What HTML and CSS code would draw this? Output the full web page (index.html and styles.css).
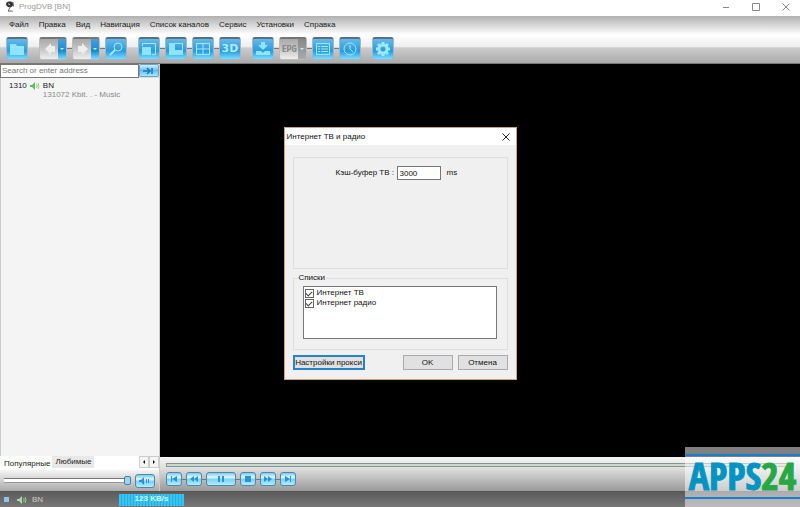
FILE: index.html
```html
<!DOCTYPE html>
<html lang="ru">
<head>
<meta charset="utf-8">
<title>ProgDVB [BN]</title>
<link rel="stylesheet" href="styles.css">
</head>
<body>
<div class="app">
  <header class="titlebar">
    <svg class="app-icon" viewBox="0 0 10 12"><path d="M1 2c2-2 6-2 7 0s0 5-3 5S0 5 1 2z" fill="#333"/><path d="M3 3l3 2M8 1l1 5M5 7l-2 4h5" stroke="#555" fill="none"/><path d="M3 3l2 1" stroke="#ddd"/></svg>
    <h1 class="app-title">ProgDVB [BN]</h1>
    <div class="window-buttons">
      <button class="win-btn" aria-label="Свернуть"><svg viewBox="0 0 8 8"><path d="M1 4.5h6"/></svg></button>
      <button class="win-btn" aria-label="Развернуть"><svg viewBox="0 0 8 8"><path d="M.5 .5h7v7h-7z"/></svg></button>
      <button class="win-btn" aria-label="Закрыть"><svg viewBox="0 0 8 8"><path d="M.5 .5l7 7M7.500 .5l-7 7"/></svg></button>
    </div>
  </header>
  <div class="chrome">
    <nav class="menu">
      <button>Файл</button><button>Правка</button><button>Вид</button><button>Навигация</button><button>Список каналов</button><button>Сервис</button><button>Установки</button><button>Справка</button>
    </nav>
    <div class="toolbar">
      <div class="tool-group">
        <button class="tool" aria-label="Открыть"><svg viewBox="0 0 16 16"><path class="fill" d="M1 3h6l1 2h7v9H1z"/><path class="line" d="M1 6h14"/></svg></button>
      </div>
      <div class="tool-group">
        <button class="tool split off" aria-label="Назад"><svg viewBox="0 0 16 16"><path class="fill" d="M9 2v3h4v6H9v3L3 8z"/></svg><span class="drop"></span></button>
        <button class="tool split off" aria-label="Вперёд"><svg viewBox="0 0 16 16"><path class="fill" d="M7 2v3H3v6h4v3l6-6z"/></svg><span class="drop"></span></button>
        <button class="tool" aria-label="Поиск"><svg viewBox="0 0 16 16"><circle class="line" cx="10" cy="6" r="4"/><path class="line thick" d="M7 9l-5 5"/></svg></button>
      </div>
      <div class="tool-group">
        <button class="tool" aria-label="Размер"><svg viewBox="0 0 16 16"><path class="line" d="M1.500 5V2.500h13v11H11"/><path class="fill" d="M1 6h9v8H1z"/></svg></button>
        <button class="tool" aria-label="Панель"><svg viewBox="0 0 16 16"><path class="fill" d="M1 2h6v7h8v5H1z"/><path class="line" d="M7 2.500h7.500V9"/></svg></button>
        <button class="tool" aria-label="Мозаика"><svg viewBox="0 0 16 16"><path class="line" d="M1.500 2.500h13v11h-13zM8 2v12M1 8h14"/></svg></button>
        <button class="tool three-d">3D</button>
      </div>
      <div class="tool-group">
        <button class="tool" aria-label="Запись"><svg viewBox="0 0 16 16"><path class="fill" d="M6 1h4v3h3L8 9 3 4h3zM1 10h5l2 2 2-2h5v4H1z"/></svg></button>
        <button class="tool split off grey" aria-label="EPG"><span class="epg">EPG</span><span class="drop"></span></button>
        <button class="tool" aria-label="Список"><svg viewBox="0 0 16 16"><path class="line" d="M1.500 2.500h13v11h-13zM3 5.500h2M6 5.500h7M3 8h2M6 8h7M3 10.500h2M6 10.500h7"/></svg></button>
        <button class="tool" aria-label="Планировщик"><svg viewBox="0 0 16 16"><circle class="line" cx="8" cy="8" r="6"/><path class="line" d="M8 4v4l3 3"/></svg></button>
      </div>
      <div class="tool-group">
        <button class="tool" aria-label="Настройки"><svg viewBox="0 0 16 16"><circle class="line gear" cx="8" cy="8" r="4"/><path class="line gear" d="M8 1v3M8 12v3M1 8h3M12 8h3M3 3l2 2M11 11l2 2M13 3l-2 2M5 11l-2 2"/></svg></button>
      </div>
    </div>
  </div>
  <div class="main">
    <aside class="sidebar">
      <form class="search">
        <input type="text" aria-label="Адрес" placeholder="Search or enter address">
        <button type="button" class="go" aria-label="Перейти"><svg viewBox="0 0 16 8"><path d="M2 4h6M6 1l3 3-3 3M11 1v6" stroke="#147bc0" fill="none" stroke-width="1.500"/></svg></button>
      </form>
      <ul class="channels">
        <li class="channel">
          <span>1310</span>
          <svg class="speaker" viewBox="0 0 10 8"><path d="M0 3h2l3-3v8L2 5H0z" fill="#65b865"/><path d="M6.500 2q1.500 2 0 4M8 1q2 3 0 6" stroke="#8bd08b" fill="none"/></svg>
          <div class="channel-text"><div>BN</div><div class="info">131072 Kbit. . - Music</div></div>
        </li>
      </ul>
      <div class="tabs">
        <button class="tab active">Популярные</button><button class="tab">Любимые</button>
        <div class="tab-scroll"><button aria-label="Влево"><svg viewBox="0 0 6 6"><path d="M4 1v4L2 3z"/></svg></button><button aria-label="Вправо"><svg viewBox="0 0 6 6"><path d="M2 1v4l2-2z"/></svg></button></div>
      </div>
      <div class="volume">
        <input type="range" aria-label="Громкость" value="100">
        <button class="media mute" aria-label="Звук"><svg viewBox="0 0 14 8"><path d="M1 3h2l3-3v8L3 5H1zM8 2h1v4H8zM10 2h1v4h-1z"/></svg></button>
      </div>
    </aside>
    <section class="player">
      <div class="video"></div>
      <div class="controls">
        <div class="seek"></div>
        <div class="media-row">
          <button class="media" aria-label="Предыдущий"><svg viewBox="0 0 14 8"><path d="M4 1h1v6H4zM10 1v6L5 4z"/></svg></button>
          <button class="media" aria-label="Перемотка назад"><svg viewBox="0 0 14 8"><path d="M7 1v6L3 4zM11 1v6L7 4z"/></svg></button>
          <button class="media wide" aria-label="Пауза"><svg viewBox="0 0 14 8"><path d="M4 1h2v6H4zM8 1h2v6H8z"/></svg></button>
          <button class="media" aria-label="Стоп"><svg viewBox="0 0 14 8"><path d="M4 1h6v6H4z"/></svg></button>
          <button class="media" aria-label="Перемотка вперёд"><svg viewBox="0 0 14 8"><path d="M3 1v6l4-3zM7 1v6l4-3z"/></svg></button>
          <button class="media" aria-label="Следующий"><svg viewBox="0 0 14 8"><path d="M4 1v6l5-3zM9 1h1v6H9z"/></svg></button>
        </div>
      </div>
    </section>
  </div>
  <footer class="status">
    <span class="square"></span>
    <svg class="speaker" viewBox="0 0 10 8"><path d="M0 3h2l3-3v8L2 5H0z" fill="#a8dba0"/><path d="M6.500 2q1.500 2 0 4M8 1q2 3 0 6" stroke="#8bd08b" fill="none"/></svg>
    <span class="station">BN</span>
    <span class="rate">123 KB/s</span>
  </footer>
</div>

<div class="dialog" role="dialog" aria-labelledby="dialog-title">
  <div class="dialog-head">
    <h2 id="dialog-title">Интернет ТВ и радио</h2>
    <button class="close" aria-label="Закрыть"><svg viewBox="0 0 8 8"><path d="M.5 .5l7 7M7.500 .5l-7 7"/></svg></button>
  </div>
  <div class="dialog-body">
    <div class="panel">
      <label for="cache">Кэш-буфер ТВ :</label>
      <input id="cache" type="text" value="3000">
      <span>ms</span>
    </div>
    <fieldset class="lists">
      <legend>Списки</legend>
      <div class="listbox">
        <label><input type="checkbox" checked>Интернет ТВ</label>
        <label><input type="checkbox" checked>Интернет радио</label>
      </div>
    </fieldset>
    <div class="actions">
      <button class="btn focus">Настройки прокси</button>
      <button class="btn">OK</button>
      <button class="btn">Отмена</button>
    </div>
  </div>
</div>

<div class="badge"><div class="badge-text">APPS<span>24</span></div></div>
</body>
</html>
```
FILE: styles.css
```css
* { box-sizing: border-box; }
html, body { height: 100%; margin: 0; }
body { font: 8px/10px "Liberation Sans", sans-serif; color: #222; overflow: hidden; background: #000; }
button, input { font: inherit; color: inherit; margin: 0; padding: 0; }
button { border: 0; background: none; white-space: nowrap; }
svg { display: block; }
h1, h2 { margin: 0; font: inherit; }

.app { display: flex; flex-direction: column; height: 100vh; }

.titlebar { display: flex; align-items: center; height: 16px; padding: 0 10px 3px 5px; background: #fff; flex: none; }
.app-icon { width: 10px; height: 11px; }
.app-title { margin-left: 4px; color: #999; }
.window-buttons { display: flex; gap: 22px; margin-left: auto; }
.win-btn svg { width: 8px; height: 8px; fill: none; stroke: #888; }

.chrome { flex: none; border-bottom: 1px solid #777; background: linear-gradient(#b0b0b0, #fff 40%, #eee 65%, #ccc 68%, #aaa); }
.menu { display: flex; align-items: center; gap: 10px; height: 17px; padding-left: 9px; }
.toolbar { display: flex; height: 30px; align-items: center; padding: 0 6px; gap: 11px; }
.tool-group { display: flex; gap: 5px; position: relative; }
.tool-group::before { content: ""; position: absolute; left: 4px; right: 4px; top: 11px; height: 1px; background: #777; }
.tool { position: relative; display: flex; align-items: center; justify-content: center; width: 22px; height: 23px; border: 1px solid #9fb8c8; border-top: 2px solid #587080; border-radius: 3px; background: linear-gradient(#68b9e7, #2a9ade 60%, #7bdcff); }
.tool svg { width: 16px; height: 16px; }
.fill { fill: #8ce5fc; }
.line { fill: none; stroke: #9aeaff; }
.thick { stroke-width: 2; }
.gear { stroke-width: 3; }
.off .fill { fill: #eee; }
.split { width: 28px; justify-content: flex-start; padding-left: 2px; background: linear-gradient(#aaa, #c5c5c5 50%, #eee); border-color: #777 #bbb #bbb; }
.drop { display: flex; align-items: center; justify-content: center; width: 8px; align-self: stretch; margin-left: auto; background: linear-gradient(#4c9ed6, #198bd2 60%, #7bdcff); }
.drop::after { content: ""; border: 2px solid transparent; border-top-color: #bdefff; border-bottom: 0; }
.grey .drop { background: linear-gradient(#888, #aaa); }
.epg { color: #888; font: bold 9px "Roboto Condensed", sans-serif; }
.three-d { color: #a5edff; font: bold 11px "DejaVu Sans", sans-serif; }

.main { display: flex; flex: 1; min-height: 0; }
.sidebar { display: flex; flex-direction: column; width: 160px; flex: none; background: #f4f4f4; border-right: 1px solid #ccc; }
.search { display: flex; height: 14px; flex: none; background: #ddd; }
.search input { flex: 1; min-width: 0; border: 1px solid #777; background: #fff; padding: 0 1px; }
.search input::placeholder { color: #777; }
.go { width: 20px; height: 13px; border: 1px solid #68a4c5; border-radius: 2px; background: linear-gradient(#d5f1ff, #67bdec 50%, #a9e9ff); }
.go svg { width: 16px; height: 8px; margin: 0 auto; }
.channels { flex: 1; margin: 0; padding: 3px 8px; list-style: none; border-left: 1px solid #ccc; }
.channel { display: flex; gap: 3px; color: #222; }
.speaker { width: 10px; height: 8px; flex: none; margin-top: 1px; }
.info { color: #888; line-height: 8px; }
.tabs { display: flex; height: 14px; flex: none; background: #fff; align-items: flex-start; }
.tab { padding: 0 3px; height: 12px; background: #e8e8e8; }
.tab.active { height: 14px; background: #fff; padding: 2px 2px 0 4px; }
.tab-scroll { display: flex; margin-left: auto; }
.tab-scroll button { width: 10px; height: 12px; border: 1px solid #ccc; background: #f4f4f4; }
.tab-scroll svg { width: 6px; height: 6px; margin: 0 auto; fill: #111; }
.volume { display: flex; align-items: center; gap: 4px; height: 21px; flex: none; padding: 0 4px; background: linear-gradient(#f5f5f5, #aaa); }
.volume input { appearance: none; flex: 1; min-width: 0; height: 9px; background: linear-gradient(#777, #777) 0 2px / 100% 1px no-repeat, linear-gradient(#fff, #fff) 0 3px / 100% 3px no-repeat, linear-gradient(#999, #999) 0 6px / 100% 1px no-repeat; }
.volume input::-webkit-slider-thumb { appearance: none; width: 7px; height: 9px; border: 1px solid #477f9e; border-radius: 2px; background: #9fd3ee; }

.player { display: flex; flex-direction: column; flex: 1; min-width: 0; }
.video { flex: 1; background: #000; }
.controls { height: 34px; flex: none; padding: 6px 6px 0; background: linear-gradient(#f5f5f5, #ddd 35%, #999); }
.seek { height: 4px; border: 1px solid #87958c; background: #cbd8ce; }
.media-row { position: relative; display: flex; width: max-content; gap: 4px; margin-top: 5px; }
.media-row::before { content: ""; position: absolute; left: 4px; right: 4px; top: 7px; height: 1px; background: #777; }
.media { position: relative; width: 16px; height: 14px; border: 1px solid #4a89ac; border-radius: 3px; background: linear-gradient(#83c8ec, #dcf6ff 35%, #7ecff5 55%, #b4eeff); }
.media svg { width: 14px; height: 8px; margin: 0 auto; fill: #2a93d2; }
.wide { width: 30px; }
.mute { width: 20px; }

.status { display: flex; align-items: center; height: 16px; flex: none; gap: 5px; padding: 0 4px; color: #ccc; border-top: 1px solid #555; background: linear-gradient(#5c5c5c, #777); }
.square { width: 5px; height: 5px; margin-right: 3px; background: #8cc6ef; }
.station { width: 82px; }
.rate { width: 65px; height: 12px; text-align: center; font-weight: bold; color: #d5f6ff; background: repeating-linear-gradient(90deg, #36c4f2 0 2px, #28afe0 2px 3px); }

.dialog { position: absolute; inset: 0; margin: auto; width: 233px; height: max-content; border: 1px solid #c9a482; background: #f0f0f0; color: #111; }
.dialog-head { display: flex; align-items: center; justify-content: space-between; height: 17px; padding: 0 6px 0 2px; background: #fff; }
.close svg { width: 8px; height: 8px; fill: none; stroke: #222; }
.dialog-body { padding: 12px 8px 9px; }
.panel { display: flex; align-items: flex-start; height: 112px; padding: 8px 0 0 42px; border: 1px solid #ddd; line-height: 13px; }
.panel input { width: 44px; height: 14px; margin: 0 6px 0 auto; padding: 0 2px; border: 1px solid #777; background: #fff; }
.panel span { width: 60px; }
.lists { margin: 4px 0 0; padding: 3px 10px 10px 9px; border: 1px solid #ddd; min-width: 0; }
.lists legend { margin-left: -5px; padding: 0 1px; }
.listbox { height: 53px; padding: 1px; border: 1px solid #777; background: #fff; }
.listbox label { display: flex; align-items: center; gap: 3px; }
.listbox input { appearance: none; width: 9px; height: 9px; border: 1px solid #666; display: grid; place-items: center; background: #fff; }
.listbox input:checked::after { content: ""; width: 5px; height: 3px; border: solid #444; border-width: 0 0 1px 1px; transform: rotate(-45deg); }
.actions { display: flex; gap: 5px; margin-top: 5px; }
.btn { width: 50px; height: 15px; border: 1px solid #aaa; background: #e1e1e1; }
.btn.focus { width: 72px; margin-right: auto; border: 2px solid #2683c4; }

.badge { position: absolute; right: 0; bottom: 0; width: 115px; height: 60px; padding-top: 7px; background: rgba(255, 255, 255, 0.5); }
.badge-text { height: 45px; border: solid #1480d0; border-width: 2px 0; text-align: center; font: bold 38px/38px "Open Sans Condensed", "Liberation Sans", sans-serif; color: #0094c2; -webkit-text-stroke: 1px currentColor; }
.badge-text span { color: #28a844; }
```
